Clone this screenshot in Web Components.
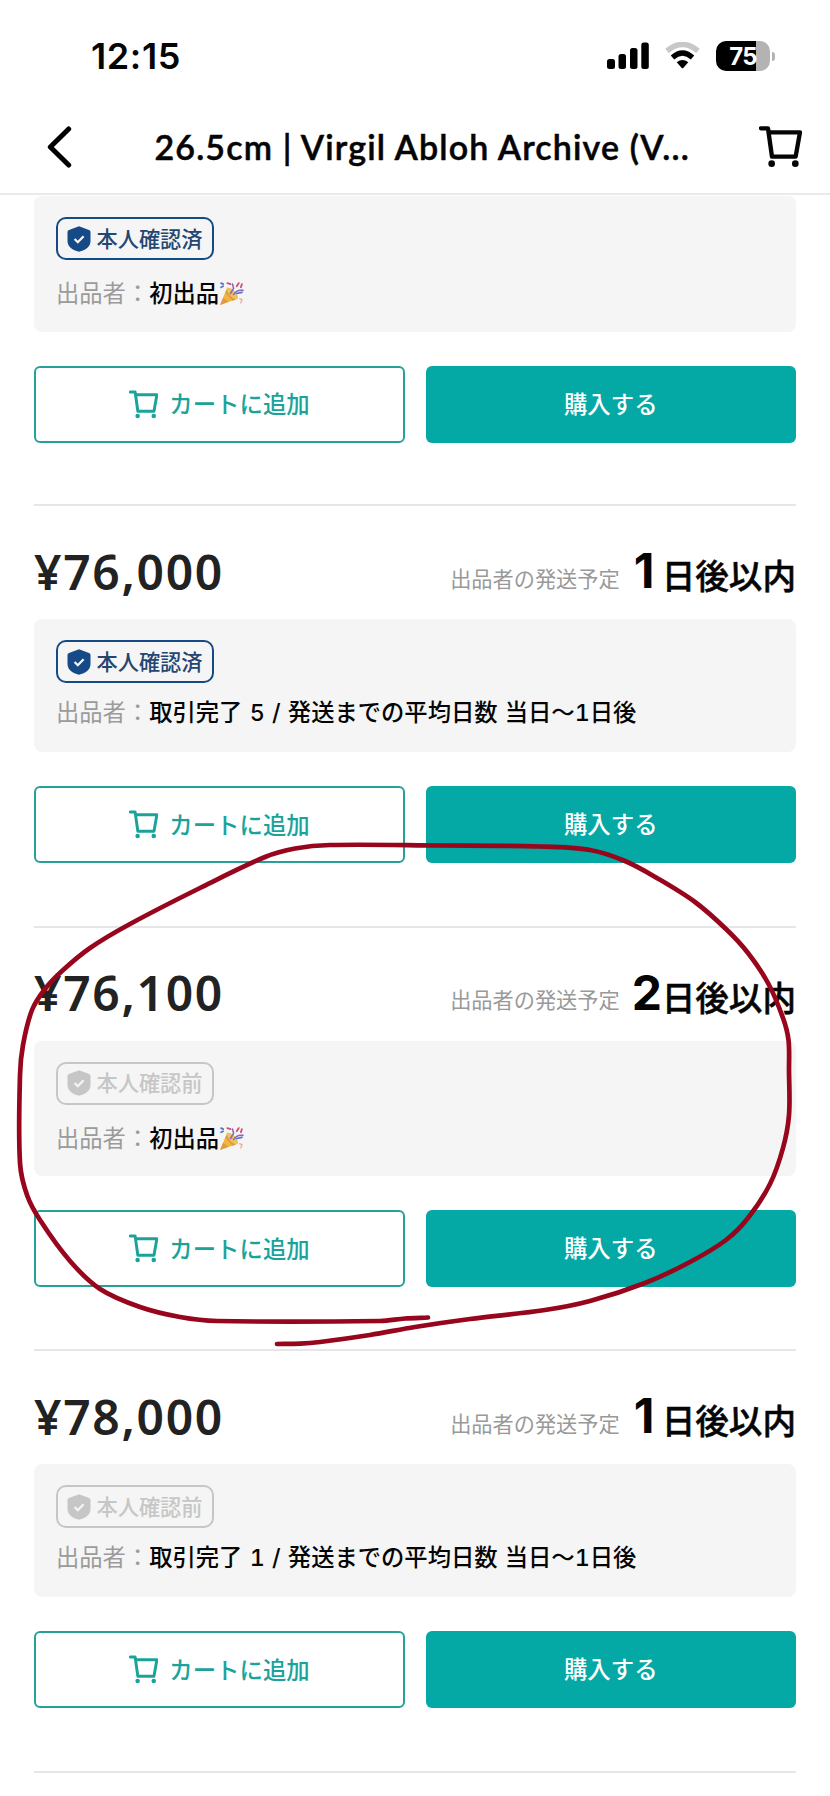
<!DOCTYPE html>
<html lang="ja">
<head>
<meta charset="utf-8">
<title>26.5cm | Virgil Abloh Archive</title>
<style>
html,body{margin:0;background:#fff}
body{width:830px;height:1796px;overflow:hidden;position:relative;font-family:Lato,"Noto Sans CJK JP",sans-serif;color:#050505}
</style>
</head>
<body>
<market-app></market-app>
<script>
const define = (name, html) => customElements.define(name, class extends HTMLElement {
  connectedCallback() {
    if (this.shadowRoot) return;
    const t = document.createElement('template');
    t.innerHTML = typeof html === 'function' ? html(this) : html;
    this.attachShadow({mode: 'open'}).append(t.content.cloneNode(true));
  }
});

define('cart-icon', `
<style>:host{display:block;width:43.3px;height:41.3px}svg{display:block;width:100%;height:100%}</style>
<svg viewBox="1028 382 130 124" fill="none" stroke="currentColor" stroke-width="13" stroke-linecap="round" stroke-linejoin="round">
<path d="M1034 389h21l12 85h71l13-73h-94"/><g fill="currentColor" stroke="none"><circle cx="1066" cy="495" r="10"/><circle cx="1137" cy="495" r="10"/></g></svg>`);

define('shield-icon', `
<style>:host{display:block;width:24px;height:26px}svg{display:block}</style>
<svg width="24" height="26" viewBox="0 0 24 26"><path fill="currentColor" d="M12 .3 22 3.9Q23.5 4.5 23.5 6V15C23.5 21 18.5 24 12 25.8 5.500 24 .5 21 .5 15V6Q.5 4.500 2 3.900Z"/>
<path d="m7.600 13 3.200 3.200 5.800-5.900" fill="none" stroke="#f5f5f5" stroke-width="2.300"/></svg>`);

define('status-bar', `
<style>
:host{display:flex;box-sizing:border-box;height:112px;padding:0 55px 0 91px;align-items:center;justify-content:space-between}
.time{font:600 36px/40px Inter,sans-serif;letter-spacing:.6px}
.icons{display:flex;align-items:center}
.wifi{margin-left:16px}
.bat{margin-left:16px;width:54px;height:30px;border-radius:10px;background:linear-gradient(90deg,#000 40px,#b3b3b3 40px);color:#fff;font:700 24px/31px Inter,sans-serif;text-align:center;letter-spacing:-.8px;box-sizing:border-box}
.nub{width:3px;height:9px;margin-left:2px;border-radius:0 4px 4px 0;background:#b3b3b3}
svg{display:block}
</style>
<span class="time">12:15</span>
<div class="icons">
<svg width="42" height="28" viewBox="0 0 42 28"><rect y="17" width="8" height="10" rx="2.500"/><rect x="11.500" y="12" width="7.500" height="15" rx="2.500"/><rect x="23" y="6" width="7.500" height="21" rx="2.500"/><rect x="34.300" y="0.500" width="7.500" height="26.500" rx="2.500"/></svg>
<svg class="wifi" width="35" height="28" viewBox="0 0 35 28" fill="none"><path d="M2 8.800Q17.500-3.800 33 8.800" stroke="#c8c8c8" stroke-width="5.500"/><path d="M7.500 15.500Q17.500 6.500 27.500 15.500" stroke="#000" stroke-width="5.200"/><path d="M11.700 20.300Q17.500 15.500 23.300 20.300L18.500 25.700Q17.500 26.700 16.500 25.700Z" fill="#000"/></svg>
<div class="bat">75</div><div class="nub"></div>
</div>`);

define('nav-bar', `
<style>
:host{display:flex;box-sizing:border-box;height:83px;align-items:center;padding:0 28px 12px 46px;border-bottom:2px solid #eaeaea}
h1{margin:0 0 0 82.500px;flex:1;white-space:nowrap;font:600 34px/44px Lato,sans-serif;letter-spacing:1.130px;-webkit-text-stroke:.5px currentColor}
svg{display:block}
</style>
<svg width="26" height="42" viewBox="0 0 78 126" fill="none" stroke="#000" stroke-width="15" stroke-linecap="round" stroke-linejoin="round"><path d="M68 9 13 63l55 54"/></svg>
<h1><slot></slot></h1><cart-icon></cart-icon>`);

define('verify-badge', e => `
<style>
:host{display:flex;box-sizing:border-box;width:158px;height:43px;border:2px solid currentColor;border-radius:10px;align-items:center;padding-left:9px;gap:6px;color:${e.hasAttribute('verified') ? '#164a86' : '#c6c6c6'};font:500 21.200px/30px "Noto Sans CJK JP",sans-serif;white-space:nowrap}
span{position:relative;top:-1px;color:${e.hasAttribute('verified') ? '#244672' : '#c6c6c6'}}
</style>
<shield-icon></shield-icon><span>${e.hasAttribute('verified') ? '本人確認済' : '本人確認前'}</span>`);

define('party-emoji', `
<style>:host{display:inline-block;width:25px;height:25px;vertical-align:-4px}svg{display:block}</style>
<svg width="25" height="25" viewBox="0 0 24 24" fill="none" stroke-linecap="round">
<path d="M1 23 8 6Q15 9 18 17Z" fill="#f2b63c"/><path d="m1 23 3-7 5 4zM6 11l7 8 3-1L8 8z" fill="#e0984a"/><ellipse cx="13" cy="12" rx="3" ry="7" transform="rotate(-43 13 12)" fill="#edc35b"/>
<path d="m11 12 3-5-1-4M14 13q3-5 9-4" stroke="#8a67bd" stroke-width="1.500"/><path d="M8 2l3 1M17 5l2-3M21 6l1-3" stroke="#cb4f75" stroke-width="1.700"/><path d="M2 2l2 1M2 6l2-1M17 12l5-1" stroke="#5276c7" stroke-width="1.700"/><path d="M20 17l2 1-1 3" stroke="#e8b5a0" stroke-width="1.500"/></svg>`);

define('seller-card', `
<style>
:host{display:block;box-sizing:border-box;background:#f5f5f5;border-radius:8px;padding:21px 21.500px 0;height:var(--card-h,133px)}
p{margin:var(--gap,12px) 0 0 .5px;font:500 23.300px/36px Inter,"Noto Sans CJK JP",sans-serif;font-kerning:none;font-variant-numeric:tabular-nums;word-spacing:1px;white-space:nowrap;color:#050505}
span{color:#9b9b9b;font-weight:400}
</style>
<slot name="badge"></slot><p><span>出品者：</span><slot></slot></p>`);

define('action-row', `
<style>
:host{display:grid;grid-template-columns:1fr 1fr;gap:21px;height:77px;margin-top:34px}
button{font:500 23.400px/34px "Noto Sans CJK JP",sans-serif;margin:0;padding:0 0 2px;border-radius:6px;display:flex;align-items:center;justify-content:center;white-space:nowrap}
.add{background:#fff;border:2px solid #26a199;color:#1ba39b;gap:11px;padding-right:0}
.buy{background:#04a9a5;border:0;color:#fff;padding:0 0 3px}
cart-icon{width:29.500px;height:29px;margin-top:2px}
</style>
<button class="add"><cart-icon></cart-icon>カートに追加</button><button class="buy">購入する</button>`);

define('price-row', e => `
<style>
:host{display:flex;height:113.400px;align-items:flex-start;justify-content:space-between;white-space:nowrap}
.price{font:600 48px/56px "Noto Sans",sans-serif;letter-spacing:1.700px;color:#222;margin-top:37.500px}
.ship{display:flex;align-items:baseline;margin-top:35px}
.lbl{font:400 21.200px/30px "Noto Sans CJK JP",sans-serif;color:#999;margin-right:12px;position:relative;top:-1.500px}
.n{font:700 48px/60px Inter,sans-serif;box-sizing:border-box;width:30px;padding-left:${e.getAttribute('days') === '1' ? 2 : 0}px}
.d{font:500 33.600px/50px "Noto Sans CJK JP",sans-serif;position:relative;top:1px;-webkit-text-stroke:.5px currentColor}
</style>
<span class="price">${e.getAttribute('price')}</span>
<div class="ship"><span class="lbl">出品者の発送予定</span><span class="n">${e.getAttribute('days')}</span><span class="d">日後以内</span></div>`);

define('listing-item', `
<style>
:host{display:block;box-sizing:border-box;height:421.500px;border-bottom:2px solid #e6e6e6}
:host([first]){height:310px}
:host([fresh]){--card-h:135.500px;--gap:16px}
:host([fresh]:not([first])){height:423.500px}
</style><slot></slot>`);

define('pen-stroke', () => {
  const p = [[428,1317.5],[405,1318.5],[380,1321],[217,1321],[180,1317],[140,1307],[100,1289],[70,1261],[40,1220],[27,1195],[20,1163],[20,1075],[23,1045],[32,1010],[45,989],[62,971],[90,948],[130,924],[200,888],[265,857],[295,848.500],[330,845],[440,845.500],[540,846.500],[590,850],[625,861],[657,878],[695,902],[727,930],[748,953],[768,983],[783,1018],[788.500,1040],[789,1070],[789,1115],[783,1148],[770,1184],[748,1218],[726,1240],[690,1262],[645,1283],[590,1301],[545,1310],[470,1319],[415,1327],[370,1335],[320,1342],[300,1343.700],[277,1344]];
  let d = 'M' + p[0];
  const L = (a, b) => Math.hypot(b[0] - a[0], b[1] - a[1]) || 1;
  for (let i = 0; i < p.length - 1; i++) {
    const a = p[i - 1] || p[i], b = p[i], c = p[i + 1], e = p[i + 2] || c, m = L(b, c) / 3;
    const s = L(a, c), t = L(b, e);
    d += `C${b[0] + (c[0] - a[0]) / s * m},${b[1] + (c[1] - a[1]) / s * m} ${c[0] - (e[0] - b[0]) / t * m},${c[1] - (e[1] - b[1]) / t * m} ${c}`;
  }
  return `<style>:host{position:absolute;left:0;top:0;pointer-events:none}svg{display:block}</style>
<svg width="830" height="1796" fill="none" stroke="#97061d" stroke-width="4.700" stroke-linecap="round"><path d="${d}"/></svg>`;
});

define('market-app', `
<style>:host{display:block}main{padding:0 34px;margin-top:1px}</style>
<status-bar></status-bar>
<nav-bar>26.5cm | Virgil Abloh Archive (V...</nav-bar>
<main>
<listing-item first fresh><seller-card><verify-badge slot="badge" verified></verify-badge>初出品<party-emoji></party-emoji></seller-card><action-row></action-row></listing-item>
<listing-item><price-row price="¥76,000" days="1"></price-row><seller-card><verify-badge slot="badge" verified></verify-badge>取引完了 5 / 発送までの平均日数 当日〜1日後</seller-card><action-row></action-row></listing-item>
<listing-item fresh><price-row price="¥76,100" days="2"></price-row><seller-card><verify-badge slot="badge"></verify-badge>初出品<party-emoji></party-emoji></seller-card><action-row></action-row></listing-item>
<listing-item><price-row price="¥78,000" days="1"></price-row><seller-card><verify-badge slot="badge"></verify-badge>取引完了 1 / 発送までの平均日数 当日〜1日後</seller-card><action-row></action-row></listing-item>
</main>
<pen-stroke></pen-stroke>`);
</script>
</body>
</html>
